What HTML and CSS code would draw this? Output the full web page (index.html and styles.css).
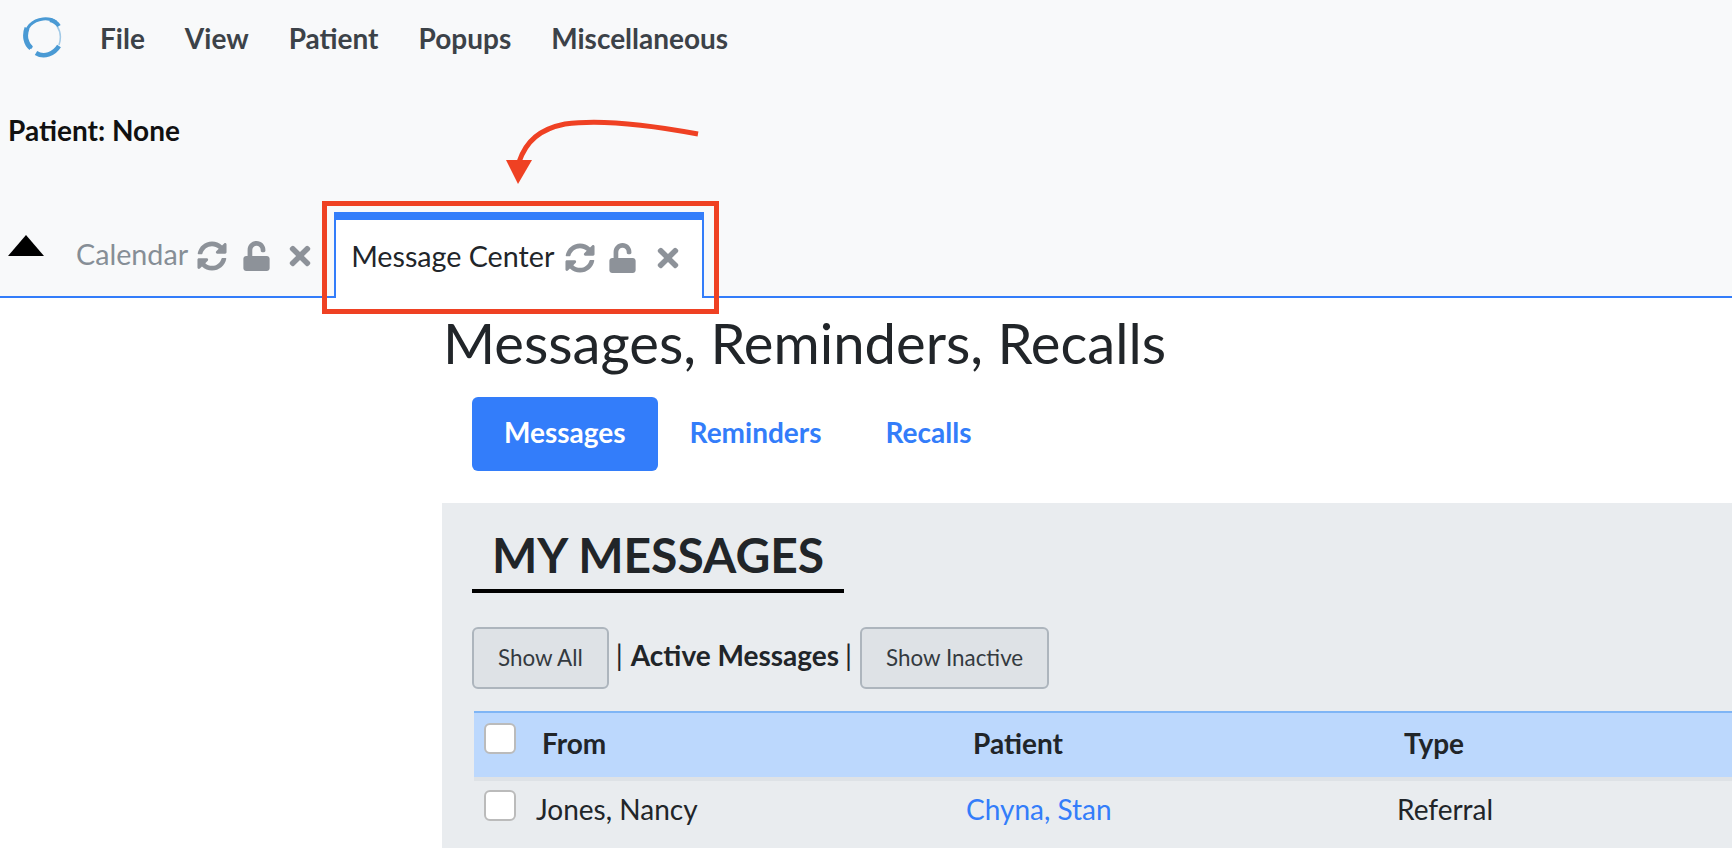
FILE: index.html
```html
<!DOCTYPE html>
<html lang="en">
<head>
    <meta charset="UTF-8">
    <title>Message Center</title>
    <link rel="stylesheet" href="styles.css">
</head>
<body>
    <svg class="defs" width="0" height="0">
        <symbol id="ico-sync" viewBox="0 0 512 512"><path d="M370.72 133.28C339.458 104.008 298.888 87.962 255.848 88c-77.458.068-144.328 53.178-162.791 126.85-1.344 5.363-6.122 9.15-11.651 9.15H24.103c-7.498 0-13.194-6.807-11.807-14.176C33.933 94.924 134.813 8 256 8c66.448 0 126.791 26.136 171.315 68.685L463.03 40.97C478.149 25.851 504 36.559 504 57.941V192c0 13.255-10.745 24-24 24H345.941c-21.382 0-32.09-25.851-16.971-40.971l41.75-41.749zM32 296h134.059c21.382 0 32.09 25.851 16.971 40.971l-41.75 41.75c31.262 29.273 71.835 45.319 114.876 45.28 77.418-.07 144.315-53.144 162.787-126.849 1.344-5.363 6.122-9.15 11.651-9.15h57.304c7.498 0 13.194 6.807 11.807 14.176C478.067 417.076 377.187 504 256 504c-66.448 0-126.791-26.136-171.315-68.685L48.97 471.03C33.851 486.149 8 475.441 8 454.059V320c0-13.255 10.745-24 24-24z"/></symbol>
        <symbol id="ico-unlock" viewBox="0 0 448 512"><path d="M400 256H152V152.9c0-39.6 31.7-72.5 71.3-72.9 40-.4 72.7 32.1 72.7 72v16c0 13.3 10.7 24 24 24h32c13.3 0 24-10.7 24-24v-16C376 68 307.5-.3 223.5 0 139.5.3 72 69.5 72 153.5V256H48c-26.5 0-48 21.5-48 48v160c0 26.5 21.5 48 48 48h352c26.5 0 48-21.5 48-48V304c0-26.5-21.5-48-48-48z"/></symbol>
        <symbol id="ico-times" viewBox="0 0 352 512"><path d="M242.72 256l100.07-100.07c12.28-12.28 12.28-32.19 0-44.48l-22.24-22.24c-12.28-12.28-32.19-12.28-44.48 0L176 189.28 75.93 89.21c-12.28-12.28-32.19-12.28-44.48 0L9.21 111.45c-12.28 12.28-12.28 32.19 0 44.48L109.28 256 9.21 356.07c-12.28 12.28-12.28 32.19 0 44.48l22.24 22.24c12.28 12.28 32.2 12.28 44.48 0L176 322.72l100.07 100.07c12.28 12.28 32.2 12.28 44.48 0l22.24-22.24c12.28-12.28 12.28-32.19 0-44.48L242.72 256z"/></symbol>
    </svg>

    <header class="top">
        <nav class="menu">
            <svg class="logo" viewBox="0 0 40 42" fill="none" stroke="#4a9ad4">
                <path d="M33 5C26 0 14 1 7 8C1 15 2 25 9 31" stroke-width="3"/>
                <path d="M4 11C1 19 3 27 8 31" stroke-width="5"/>
                <path d="M27 3C31 4 34 6 36 9" stroke-width="4"/>
                <path d="M13 36C21 41 31 37 36 29" stroke-width="4.5"/>
                <path d="M34 9C38 15 38 22 36 28" stroke-width="1.5" stroke-opacity="0.5"/>
            </svg>
            <a class="menu-item">File</a>
            <a class="menu-item">View</a>
            <a class="menu-item">Patient</a>
            <a class="menu-item">Popups</a>
            <a class="menu-item">Miscellaneous</a>
        </nav>
        <p class="patient">Patient: None</p>
        <div class="tabs">
            <span class="collapse"></span>
            <div class="tab">
                <span class="tab-name">Calendar</span>
                <svg class="ico sync"><use href="#ico-sync"/></svg>
                <svg class="ico lock"><use href="#ico-unlock"/></svg>
                <svg class="ico close"><use href="#ico-times"/></svg>
            </div>
            <div class="tab active">
                <span class="tab-name">Message Center</span>
                <svg class="ico sync"><use href="#ico-sync"/></svg>
                <svg class="ico lock"><use href="#ico-unlock"/></svg>
                <svg class="ico close"><use href="#ico-times"/></svg>
            </div>
        </div>
    </header>

    <main class="content">
        <h1 class="title">Messages, Reminders, Recalls</h1>
        <ul class="pills">
            <li class="pill on">Messages</li>
            <li class="pill">Reminders</li>
            <li class="pill">Recalls</li>
        </ul>
        <section class="panel">
            <h2 class="panel-title">MY MESSAGES</h2>
            <div class="filters">
                <button class="btn">Show All</button>
                <span class="sep">|</span>
                <b class="current">Active Messages</b>
                <span class="sep">|</span>
                <button class="btn">Show Inactive</button>
            </div>
            <div class="row head">
                <div class="cell first"><input type="checkbox" class="check"><span>From</span></div>
                <div class="cell">Patient</div>
                <div class="cell">Type</div>
            </div>
            <div class="row">
                <div class="cell first"><input type="checkbox" class="check"><span>Jones, Nancy</span></div>
                <div class="cell"><a class="link">Chyna, Stan</a></div>
                <div class="cell">Referral</div>
            </div>
        </section>
    </main>

    <!-- annotation on top of the screenshot -->
    <div class="callout-box"></div>
    <svg class="callout-arrow" width="260" height="100" viewBox="0 0 260 100">
        <path d="M238 36C190 27 140 21 105 26C80 31 66 43 59 64" fill="none" stroke="#ef4123" stroke-width="5"/>
        <path d="M46 62L72 62L58 86Z" fill="#ef4123"/>
    </svg>
</body>
</html>
```

FILE: styles.css
```css
*{
    box-sizing: border-box;
}
html, body{
    margin: 0;
    height: 100%;
    overflow: hidden;
}
body{
    font-family: "Lato", "Liberation Sans", sans-serif;
    color: #212529;
    background: #fff;
}
.defs{
    position: absolute;
}

/* top area */
.top{
    height: 298px;
    background: #f8f9fa;
    border-bottom: 2px solid #337dfa;
    display: flex;
    flex-direction: column;
}
.menu{
    display: flex;
    align-items: center;
    height: 76px;
    padding-left: 23px;
}
.logo{
    width: 40px;
    height: 42px;
    margin-right: 37px;
}
.menu-item{
    font-size: 28px;
    font-weight: 700;
    color: #3c4248;
    margin-right: 40px;
}
.patient{
    margin: 38px 0 0 8px;
    font-size: 28px;
    font-weight: 700;
    line-height: 32px;
    color: #111;
}
.tabs{
    margin-top: auto;
    display: flex;
    align-items: flex-end;
    height: 86px;
    margin-bottom: -2px;
}
.collapse{
    width: 0;
    height: 0;
    margin: 0 32px 42px 8px;
    border-left: 18px solid transparent;
    border-right: 18px solid transparent;
    border-bottom: 21px solid #000;
}
.tab{
    display: flex;
    align-items: center;
    height: 74px;
    padding-bottom: 14px;
    color: #868e96;
    font-size: 28.7px;
    margin-right: 23px;
}
.tab.active{
    height: 86px;
    width: 370px;
    margin-right: 0;
    padding: 8px 0 14px 15px;
    background: #fff;
    color: #212529;
    border: 2px solid #337dfa;
    border-top-width: 8px;
    border-bottom: 0;
}
.tab-name{
    margin-right: 9px;
}
.ico{
    fill: #8d9299;
    height: 30px;
    margin-top: 3px;
}
.sync{
    width: 30px;
    margin-right: 16px;
}
.lock{
    width: 27px;
    margin-right: 19px;
}
.close{
    width: 22px;
}
.active .tab-name{
    margin-right: 11px;
}
.active .sync{
    margin-right: 14px;
}
.active .lock{
    margin-right: 21px;
}

/* main area */
.content{
    margin-left: 442px;
}
.title{
    margin: 15px 0 0 1px;
    font-size: 56.2px;
    font-weight: 400;
    line-height: 60px;
    color: #212529;
}
.pills{
    list-style: none;
    display: flex;
    margin: 24px 0 0 30px;
    padding: 0;
}
.pill{
    padding: 0 32px;
    height: 74px;
    line-height: 71px;
    font-size: 28px;
    font-weight: 700;
    color: #337dfa;
    border-radius: 6px;
}
.pill.on{
    background: #337dfa;
    color: #fff;
}
.panel{
    margin-top: 32px;
    height: 346px;
    background: #e9ecef;
    padding-left: 30px;
}
.panel-title{
    display: inline-block;
    width: 372px;
    margin: 0;
    padding: 26px 0 8px 20px;
    border-bottom: 4px solid #000;
    font-size: 48px;
    line-height: 52px;
    font-weight: 700;
    color: #212529;
}
.filters{
    display: flex;
    align-items: center;
    margin-top: 34px;
    font-size: 28px;
}
.btn{
    height: 62px;
    padding: 0 24px 2px;
    background: #dee2e6;
    border: 2px solid #adb5bd;
    border-radius: 6px;
    font-family: inherit;
    font-size: 22.4px;
    color: #343a40;
}
.sep{
    margin: 0 8px 0 6px;
    padding-bottom: 6px;
}
.sep:first-of-type{
    margin-left: 7px;
}
.current{
    padding-bottom: 6px;
}
.row{
    display: grid;
    grid-template-columns: 492px 431px 1fr;
    margin-left: 2px;
    height: 66px;
    padding-bottom: 11px;
    align-items: center;
    font-size: 28px;
}
.row.head{
    margin-top: 22px;
    height: 70px;
    padding-bottom: 0;
    background: #bcd8fd;
    border-top: 2px solid #7fb5f5;
    border-bottom: 4px solid #dee2e6;
    font-weight: 700;
}
.row.head .cell{
    padding: 0 0 4px 7px;
}
.cell.first{
    display: flex;
    align-items: center;
    padding-left: 10px;
}
.row.head .cell.first{
    padding: 0 0 0 10px;
}
.row.head .cell.first span{
    margin: 0 0 4px 26px;
}
.first span{
    margin-left: 20px;
}
.check{
    appearance: none;
    width: 32px;
    height: 31px;
    margin: 0 0 6px;
    background: #fff;
    border: 2px solid #bbb;
    border-radius: 6px;
}
.row.head .check{
    margin-bottom: 14px;
}
.link{
    color: #337dfa;
}

/* red annotation */
.callout-box{
    position: absolute;
    left: 322px;
    top: 201px;
    width: 397px;
    height: 113px;
    border: 5px solid #ef4123;
}
.callout-arrow{
    position: absolute;
    left: 460px;
    top: 98px;
}
```
